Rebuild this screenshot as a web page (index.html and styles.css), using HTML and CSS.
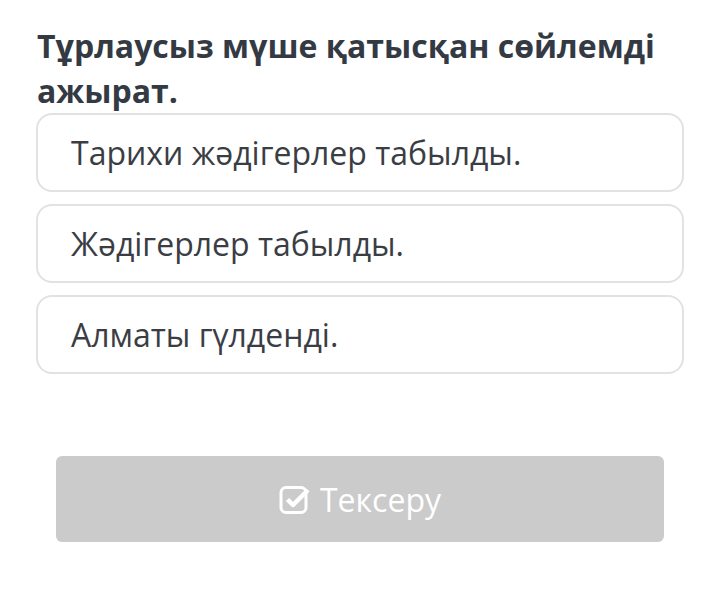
FILE: index.html
```html
<!DOCTYPE html>
<html>
<head>
<meta charset="utf-8">
<link rel="stylesheet" href="styles.css">
</head>
<body>
<div class="page">
  <h1 class="question">Тұрлаусыз мүше қатысқан сөйлемді ажырат.</h1>
  <div class="options">
    <div class="option">Тарихи жәдігерлер табылды.</div>
    <div class="option">Жәдігерлер табылды.</div>
    <div class="option">Алматы гүлденді.</div>
  </div>
  <button class="check">
    <svg class="icon" width="32" height="32" viewBox="0 0 32 32">
      <rect x="2" y="4.5" width="25" height="25" rx="5" fill="none" stroke="#fff" stroke-width="3"/>
      <path d="M8.5 16.5 L14 22 L29 7" fill="none" stroke="#fff" stroke-width="4.5" stroke-linejoin="round"/>
    </svg>
    <span>Тексеру</span>
  </button>
</div>
</body>
</html>
```
FILE: styles.css
```css
* { box-sizing: border-box; }
html, body { margin: 0; padding: 0; background: #fff; }
body { font-family: "Open Sans", "Noto Sans", sans-serif; }
.page {
  width: 720px;
  padding: 23px 36px 0 36px;
}
.question {
  margin: 0 0 0 1px;
  font-size: 32px;
  font-weight: 700;
  line-height: 45px;
  color: #343a43;
}
.options {
  display: flex;
  flex-direction: column;
  gap: 12px;
}
.option {
  height: 79px;
  border: 2px solid #e2e2e2;
  border-radius: 16px;
  padding: 0 0 0 33px;
  display: flex;
  align-items: center;
  font-size: 32px;
  color: #3a3e44;
  width: 648px;
}
.check {
  margin: 82px 0 0 20px;
  width: 608px;
  height: 86px;
  border: none;
  border-radius: 6px;
  background: #cbcbcb;
  color: #fff;
  font-family: "Open Sans", "Noto Sans", sans-serif;
  font-size: 32px;
  display: flex;
  align-items: center;
  justify-content: center;
  gap: 9px;
  padding: 0;
}
.icon { display: block; }
```
